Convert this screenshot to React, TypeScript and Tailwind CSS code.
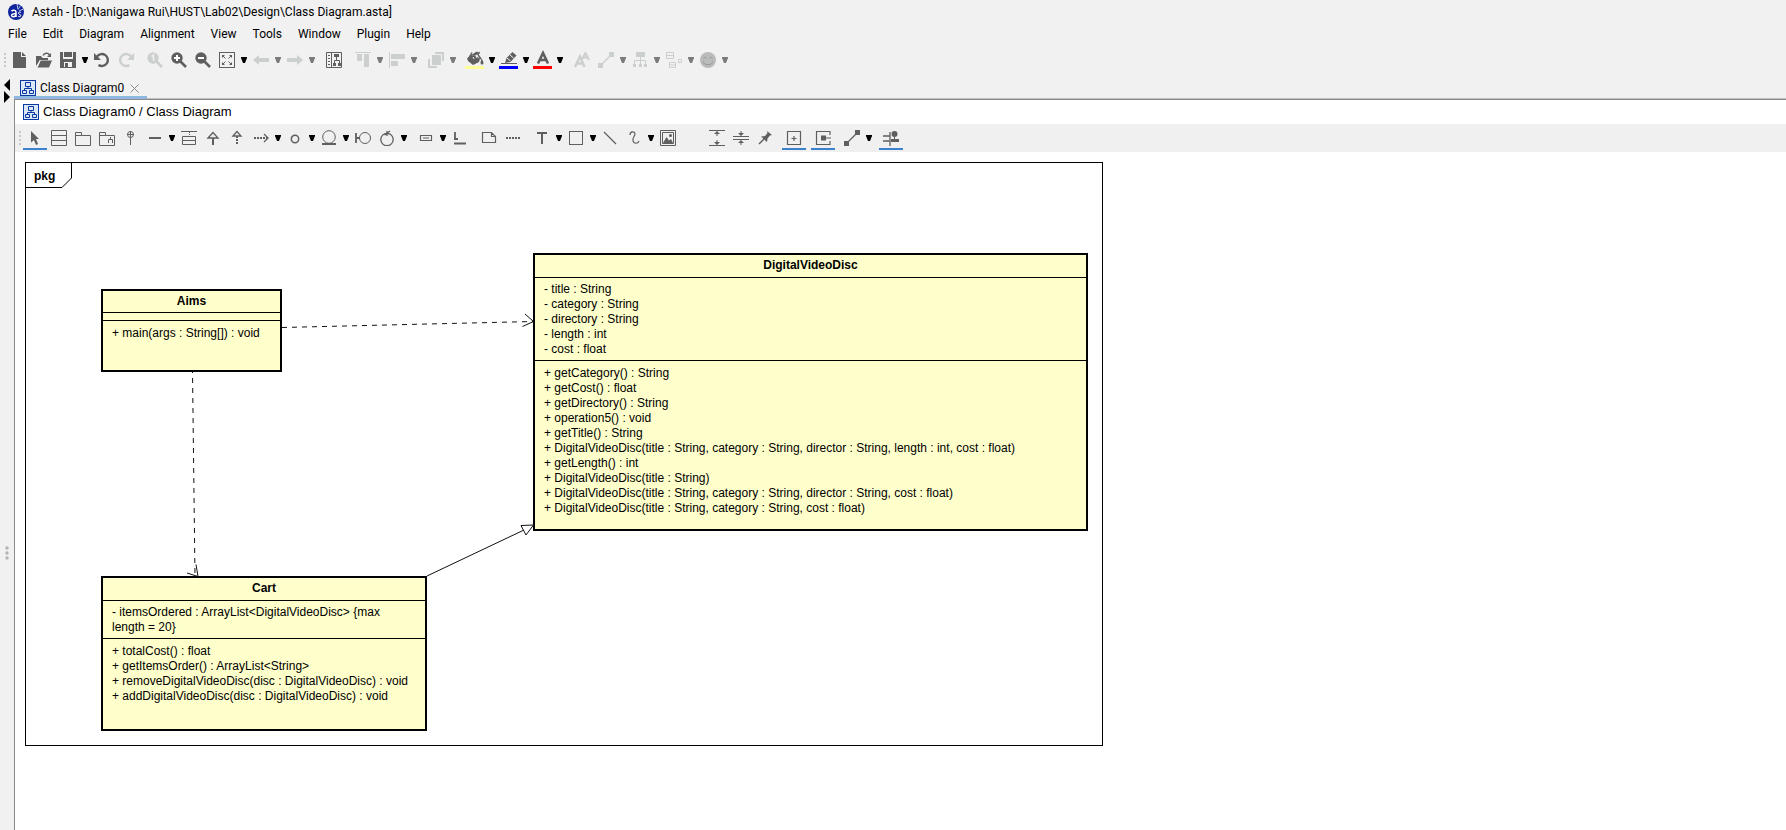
import type { ReactNode } from "react";

const DARK = "#5f5f5f";
const PALE = "#cbcfce";

function Icon({ children, size = 16 }: { children: ReactNode; size?: number }) {
  return (
    <svg
      width={size}
      height={size}
      viewBox={`0 0 ${size} ${size}`}
      fill="none"
      stroke={DARK}
      strokeWidth="1"
      className="block shrink-0"
      aria-hidden="true"
    >
      {children}
    </svg>
  );
}

function Tool({ label, active, children }: { label: string; active?: boolean; children: ReactNode }) {
  return (
    <button
      type="button"
      aria-label={label}
      className={
        active
          ? "flex h-6 w-6 shrink-0 items-center justify-center border-y-2 border-t-transparent border-b-[#3a82cb]"
          : "flex h-6 w-6 shrink-0 items-center justify-center"
      }
    >
      {children}
    </button>
  );
}

function Drop({ label, pale }: { label: string; pale?: boolean }) {
  return (
    <button
      type="button"
      aria-label={`${label} options`}
      className="flex h-6 w-[10px] shrink-0 items-center justify-center"
    >
      <svg width="6" height="6" viewBox="0 0 6 6" fill={pale ? "#7a7a7a" : "#000"} aria-hidden="true">
        <path d="M0 0h6v1L4 6H2L0 1z" />
      </svg>
    </button>
  );
}

function Gap() {
  return <span className="w-[5px] shrink-0" />;
}

function Grip() {
  return (
    <svg width="2" height="16" viewBox="0 0 2 16" fill="#c8c8c8" className="ml-1 mr-[2px] shrink-0" aria-hidden="true">
      <path d="M0 1h2v2H0zM0 5h2v2H0zM0 9h2v2H0zM0 13h2v2H0z" />
    </svg>
  );
}

function DiagramIcon() {
  return (
    <svg width="16" height="16" viewBox="0 0 16 16" fill="none" stroke="#0838a0" className="block shrink-0" aria-hidden="true">
      <rect x="0.5" y="0.5" width="15" height="15" fill="#dce8f8" />
      <path d="M5.5 2.5h5v4h-5zM2.5 10.5h4v3h-4zM9.5 10.5h4v3h-4zM8 6.5v2M4.5 10.5v-2h7v2" />
    </svg>
  );
}

function Magnifier({ color, children }: { color: string; children: ReactNode }) {
  return (
    <Icon>
      <circle cx="6" cy="6" r="5.7" fill={color} stroke="none" />
      <path d="M9.5 9.5l5.5 5.5" stroke={color} strokeWidth="2.6" />
      {children}
    </Icon>
  );
}

function MainToolbar() {
  return (
    <div role="toolbar" aria-label="Main" className="flex h-8 items-center">
      <Grip />
      <Tool label="New">
        <Icon>
          <path d="M1 0h8v5h5v11H1z" fill={DARK} stroke="none" />
          <path d="M10 0l4 4h-4z" fill={DARK} stroke="none" />
        </Icon>
      </Tool>
      <Tool label="Open">
        <Icon>
          <path d="M0 14V4h5l1.500 2H12v2H4z" fill={DARK} stroke="none" />
          <path d="M4.500 8.500H16l-3 7H1.500z" fill={DARK} stroke="none" />
          <path d="M4.300 8L1.300 15" stroke="#f1f1f1" />
          <path d="M7 3.500c1.500-3 5-3 6.500-.5" strokeWidth="1.500" />
          <path d="M15 1v4h-4z" fill={DARK} stroke="none" />
        </Icon>
      </Tool>
      <Tool label="Save">
        <Icon>
          <path d="M0 0h3v6h10V0h3v16H0z" fill={DARK} stroke="none" />
          <path d="M4 0h8v5H4z" fill={DARK} stroke="none" />
          <path d="M3.500 0v6M12.500 0v6M3 6.500h10" stroke="#f1f1f1" />
          <path d="M4 10h8v5H4z" fill="#f1f1f1" stroke="none" />
          <path d="M5 11h3v4H5z" fill={DARK} stroke="none" />
        </Icon>
      </Tool>
      <Drop label="Save" />
      <Tool label="Undo">
        <Icon>
          <path d="M3 4.500A6 6 0 1 1 4.500 13" strokeWidth="2.400" />
          <path d="M0 1v7h7z" fill={DARK} stroke="none" />
        </Icon>
      </Tool>
      <Tool label="Redo">
        <Icon>
          <path d="M13 4.500A6 6 0 1 0 11.500 13" stroke={PALE} strokeWidth="2.400" />
          <path d="M16 1v7H9z" fill={PALE} stroke="none" />
        </Icon>
      </Tool>
      <Gap />
      <Tool label="Actual size">
        <Magnifier color={PALE}>
          <path d="M4.500 4.500L6.500 3v6" stroke="#f1f1f1" strokeWidth="1.500" />
        </Magnifier>
      </Tool>
      <Tool label="Zoom in">
        <Magnifier color={DARK}>
          <path d="M3 6h6M6 3v6" stroke="#fff" strokeWidth="2" />
        </Magnifier>
      </Tool>
      <Tool label="Zoom out">
        <Magnifier color={DARK}>
          <path d="M3 6h6" stroke="#fff" strokeWidth="2" />
        </Magnifier>
      </Tool>
      <Tool label="Fit in window">
        <Icon>
          <rect x="0.500" y="0.500" width="15" height="15" />
          <path d="M3 6V3h3zM10 3h3v3zM13 10v3h-3zM6 13H3v-3z" fill={DARK} stroke="none" />
          <path d="M3 3l3.500 3.500M13 3L9.500 6.500M13 13L9.500 9.500M3 13l3.500-3.500" />
        </Icon>
      </Tool>
      <Drop label="Fit in window" />
      <Tool label="Back">
        <Icon>
          <path d="M0 8l6-5v3h10v4H6v3z" fill={PALE} stroke="none" />
        </Icon>
      </Tool>
      <Drop label="Back" pale />
      <Tool label="Forward">
        <Icon>
          <path d="M16 8l-6-5v3H0v4h10v3z" fill={PALE} stroke="none" />
        </Icon>
      </Tool>
      <Drop label="Forward" pale />
      <Gap />
      <Tool label="Structure map">
        <Icon>
          <path d="M0.500 0.500h15v15H0.500zM5.500 0v16M2 3.500h2M2 6.500h2M2 9.500h2M2 12.500h2" />
          <path d="M8 2h5v3H8zM7 11h3v3H7zM12 11h3v3h-3z" fill={DARK} stroke="none" />
          <path d="M10.500 5v3M8.500 11V8.500h5V11" />
        </Icon>
      </Tool>
      <Gap />
      <Tool label="Align top">
        <Icon>
          <path d="M0 0h16v1H0zM2 2h5v7H2zM9 2h5v13H9z" fill={PALE} stroke="none" />
        </Icon>
      </Tool>
      <Drop label="Align top" pale />
      <Tool label="Align left">
        <Icon>
          <path d="M0 0h1v16H0zM2 2h14v5H2zM2 9h7v5H2z" fill={PALE} stroke="none" />
        </Icon>
      </Tool>
      <Drop label="Align left" pale />
      <Gap />
      <Tool label="Order">
        <Icon>
          <path d="M7 0h9v9h-2V2H7zM0 7h2v7h7v2H0z" fill={PALE} stroke="none" />
          <path d="M4 3h9v10H4z" fill={PALE} stroke="none" />
        </Icon>
      </Tool>
      <Drop label="Order" pale />
      <Gap />
      <Tool label="Fill color">
        <Icon size={20}>
          <path d="M2 8.500L9 5l6 3.500-1 3.500-6 3-5-4z" fill={DARK} stroke="none" />
          <path d="M3 8l9-6M7 2.500L5 6l2 1M12 2l1.500 3.500L16 9M9 5l6-2.500" strokeWidth="1.400" />
          <path d="M8 7l1 2M11 6l1 2" stroke="#f1f1f1" />
          <path d="M16.500 8c1.500 3 2 4 2 5a1.500 1.500 0 0 1-3 0c0-1 .5-2 1-5z" fill={DARK} stroke="none" />
          <path d="M0 16h19v3H0z" fill="#ffff99" stroke="none" />
        </Icon>
      </Tool>
      <Drop label="Fill color" />
      <Tool label="Line color">
        <Icon size={20}>
          <path d="M6 13l1.500-5 6-6 4 3.500-6 6.500z" fill={DARK} stroke="none" />
          <path d="M2 13.500h16" />
          <path d="M8 8l3.500 3M11 5l3.500 3" stroke="#f1f1f1" />
          <path d="M0 16h19v3H0z" fill="#0000ff" stroke="none" />
        </Icon>
      </Tool>
      <Drop label="Line color" />
      <Tool label="Font color">
        <Icon size={20}>
          <path d="M5 13.500L10 3l5 10.500M6.500 10h7" strokeWidth="2.600" />
          <path d="M0 16h19v3H0z" fill="#ff0000" stroke="none" />
        </Icon>
      </Tool>
      <Drop label="Font color" />
      <Gap />
      <Tool label="Font">
        <Icon>
          <path d="M1 15L6 4.500 10.500 15M3 11.500h6" stroke={PALE} strokeWidth="2.400" />
          <path d="M8 7l3.500-6L15 8M9.500 5.500h4" stroke={PALE} strokeWidth="2" />
        </Icon>
      </Tool>
      <Tool label="Line style">
        <Icon>
          <path d="M0 11h5v5H0zM11 0h5v5h-5z" fill={PALE} stroke="none" />
          <path d="M3 13L13 3" stroke={PALE} strokeWidth="1.500" />
        </Icon>
      </Tool>
      <Drop label="Line style" pale />
      <Tool label="Tree layout">
        <Icon>
          <path d="M4 0h9v5H4zM1 12h3v3H1zM7 12h3v3H7zM12 12h3v3h-3z" fill={PALE} stroke="none" />
          <path d="M8.500 5v7M2.500 12V8.500h11V12" stroke={PALE} />
        </Icon>
      </Tool>
      <Drop label="Tree layout" pale />
      <Tool label="Presentation">
        <Icon>
          <path d="M0.500 0.500h7v6h-7zM0 3.500h8M3.500 10.500h6v5h-6zM3 13h7M12.500 7.500h3v3h-3z" stroke={PALE} />
        </Icon>
      </Tool>
      <Drop label="Presentation" pale />
      <Tool label="Icon">
        <Icon>
          <circle cx="8" cy="8" r="8" fill="#b9bcbb" stroke="none" />
          <path d="M3 9.500c1.500 4.500 8.500 4.500 10 0M3.500 6.500c.5-1.500 2.500-1.500 3 0M9.500 6.500c.5-1.500 2.500-1.500 3 0" stroke="#969998" />
        </Icon>
      </Tool>
      <Drop label="Icon" pale />
    </div>
  );
}

function DrawingToolbar() {
  return (
    <div role="toolbar" aria-label="Drawing" className="flex h-7 items-center bg-[#f0f0f0]">
      <Grip />
      <Tool label="Select" active>
        <Icon>
          <path d="M4 1l8 8H9l2 5-2 1-2-5-3 2.500z" fill={DARK} stroke="none" />
        </Icon>
      </Tool>
      <Tool label="Class">
        <Icon>
          <path d="M0.500 0.500h15v15H0.500zM0 5.500h16M0 10.500h16" />
        </Icon>
      </Tool>
      <Tool label="Package">
        <Icon>
          <path d="M0.500 15.500v-13h6v3h9v10zM0.500 5.500h6" />
        </Icon>
      </Tool>
      <Tool label="Subsystem">
        <Icon>
          <path d="M0.500 15.500v-13h6v3h9v10zM0.500 5.500h6M9.500 13v-3.500h4V13M11.500 9.500V7" />
        </Icon>
      </Tool>
      <Tool label="Nest">
        <Icon>
          <circle cx="7.500" cy="4.500" r="3" />
          <path d="M7.500 1v14M4 4.500h7" />
        </Icon>
      </Tool>
      <Tool label="Association">
        <Icon>
          <path d="M2 8h12" strokeWidth="2" />
        </Icon>
      </Tool>
      <Drop label="Association" />
      <Tool label="Association class">
        <Icon>
          <path d="M0 1.500h16M1.500 6.500h13v8h-13zM1 10.500h14" />
          <path d="M8.500 2v5" strokeDasharray="1 1" />
        </Icon>
      </Tool>
      <Tool label="Generalization">
        <Icon>
          <path d="M8 8v7" strokeWidth="2" />
          <path d="M3 8l5-5.500L13 8z" strokeWidth="1.300" />
        </Icon>
      </Tool>
      <Tool label="Realization">
        <Icon>
          <path d="M8 6v9" strokeWidth="2" strokeDasharray="2 1" />
          <path d="M4 6l4-4.500L12 6z" strokeWidth="1.300" />
        </Icon>
      </Tool>
      <Tool label="Dependency">
        <Icon>
          <path d="M1 8h13" strokeWidth="2" strokeDasharray="2 1" />
          <path d="M11 4l4 4-4 4" strokeWidth="1.300" />
        </Icon>
      </Tool>
      <Drop label="Dependency" />
      <Tool label="Interface">
        <Icon>
          <circle cx="8" cy="9" r="3.700" strokeWidth="1.500" />
        </Icon>
      </Tool>
      <Drop label="Interface" />
      <Tool label="Entity">
        <Icon>
          <circle cx="8" cy="7" r="6.300" />
          <path d="M1 14h14" strokeWidth="2" />
        </Icon>
      </Tool>
      <Drop label="Entity" />
      <Tool label="Boundary">
        <Icon>
          <circle cx="10" cy="8" r="5.500" />
          <path d="M1 3v10M1 8h4" strokeWidth="1.800" />
        </Icon>
      </Tool>
      <Tool label="Control">
        <Icon>
          <circle cx="8" cy="9.500" r="6.200" strokeWidth="1.300" />
          <path d="M8 1v5M8 3l3-2M8 3.500L5.500 5" strokeWidth="1.300" />
        </Icon>
      </Tool>
      <Drop label="Control" />
      <Gap />
      <Tool label="Instance specification">
        <Icon>
          <path d="M2.500 5.500h11v5h-11zM5 8h6" strokeWidth="1.200" />
        </Icon>
      </Tool>
      <Drop label="Instance specification" />
      <Tool label="Link">
        <Icon>
          <path d="M3 2v7M2 9h4M2 13.500h12" strokeWidth="1.800" />
        </Icon>
      </Tool>
      <Gap />
      <Tool label="Note">
        <Icon>
          <path d="M1.500 2.500h9l4 4v6h-13zM10.500 2.500v4h4" strokeWidth="1.200" />
        </Icon>
      </Tool>
      <Tool label="Note anchor">
        <Icon>
          <path d="M1 8h14" strokeWidth="2" strokeDasharray="2 1" />
        </Icon>
      </Tool>
      <Gap />
      <Tool label="Text">
        <Icon>
          <path d="M3 3h10M8 3v11" strokeWidth="2" />
        </Icon>
      </Tool>
      <Drop label="Text" />
      <Tool label="Rectangle">
        <Icon>
          <rect x="1.500" y="1.500" width="13" height="13" />
        </Icon>
      </Tool>
      <Drop label="Rectangle" />
      <Tool label="Line">
        <Icon>
          <path d="M2 2l12 12" strokeWidth="1.300" />
        </Icon>
      </Tool>
      <Tool label="Freehand">
        <Icon>
          <path d="M4 5c0-4 5-4 5-1 0 2-3 4-2 7s5 3 6 0" strokeWidth="1.200" />
        </Icon>
      </Tool>
      <Drop label="Freehand" />
      <Tool label="Image">
        <Icon>
          <path d="M0.500 0.500h15v15H0.500zM2.500 2.500h11v11h-11z" />
          <path d="M3 13l3.500-6L9 10.500 11 9l2 4z" fill={DARK} stroke="none" />
          <circle cx="10.500" cy="5.500" r="1.500" fill={DARK} stroke="none" />
        </Icon>
      </Tool>
      <span className="w-[25px] shrink-0" />
      <Tool label="Expand vertically">
        <Icon>
          <path d="M0 0.500h16M0 15.500h16M8 2v4M8 10v4" />
          <path d="M5 4l3-3 3 3zM5 12l3 3 3-3z" fill={DARK} stroke="none" />
        </Icon>
      </Tool>
      <Tool label="Shrink vertically">
        <Icon>
          <path d="M0 6.500h16M0 9.500h16M8 1v4M8 11v4" />
          <path d="M5 3l3 3 3-3zM5 13l3-3 3 3z" fill={DARK} stroke="none" />
        </Icon>
      </Tool>
      <Tool label="Pin">
        <Icon>
          <path d="M2 14l5-5" strokeWidth="1.400" />
          <path d="M10 1l5 4-2 .5-2.500 3L10 12 4 6.500l4-.5 2.500-3z" fill={DARK} stroke="none" />
        </Icon>
      </Tool>
      <Gap />
      <Tool label="Auto expand" active>
        <Icon>
          <path d="M1.500 1.500h13v13h-13zM5.500 8.500h5M8 6v5" strokeWidth="1.200" />
        </Icon>
      </Tool>
      <Gap />
      <Tool label="Snap to shape" active>
        <Icon>
          <path d="M15 5V1.500H1.500v13H15V11M8 8h8" strokeWidth="1.200" />
          <path d="M6 5.500h5v5H6z" fill={DARK} stroke="none" />
        </Icon>
      </Tool>
      <Gap />
      <Tool label="Line shape">
        <Icon>
          <path d="M0 11h5v5H0zM11 0h5v5h-5z" fill={DARK} stroke="none" />
          <path d="M3 13L13 3" strokeWidth="1.300" />
        </Icon>
      </Tool>
      <Drop label="Line shape" />
      <Gap />
      <Tool label="Auto alignment" active>
        <Icon>
          <path d="M0 6h7M0 11h7M7 2v14" strokeWidth="1.300" />
          <circle cx="11.500" cy="4" r="3" fill={DARK} stroke="none" />
          <path d="M8 9h8v3H8zM11 6h1v4h-1z" fill={DARK} stroke="none" />
        </Icon>
      </Tool>
    </div>
  );
}

function ClassNode({
  name,
  place,
  attributes,
  operations,
}: {
  name: string;
  place: string;
  attributes: string[];
  operations: string[];
}) {
  return (
    <section
      className={`absolute flex flex-col border-2 border-black bg-[#ffffcc] text-[12px] leading-[15px] ${place}`}
    >
      <h2
        className={
          attributes.length
            ? "border-b border-black pt-[3px] pb-1 text-center font-bold"
            : "border-b border-black py-[3px] text-center font-bold"
        }
      >
        {name}
      </h2>
      <ul className={attributes.length ? "border-b border-black pt-1 pr-4 pb-[3px] pl-[9px]" : "h-2 border-b border-black"}>
        {attributes.map((a) => (
          <li key={a}>{a}</li>
        ))}
      </ul>
      <ul className="pt-[5px] pl-[9px]">
        {operations.map((o) => (
          <li key={o}>{o}</li>
        ))}
      </ul>
    </section>
  );
}

function Canvas() {
  return (
    <div className="relative min-h-[620px] flex-1 overflow-hidden bg-white font-['Liberation_Sans',Arial,sans-serif] text-black">
      <div className="absolute top-[10px] left-[10px] h-[584px] w-[1078px] border border-black" />
      <svg className="absolute top-[10px] left-[10px]" width="47" height="26" fill="none" stroke="#000" aria-hidden="true">
        <path d="M0 25.500h37l9.500-9.500V0" />
      </svg>
      <h1 className="absolute top-[17px] left-[19px] text-[12px] leading-[15px] font-bold">pkg</h1>

      <ClassNode
        name="Aims"
        place="top-[137px] left-[86px] h-[83px] w-[181px]"
        attributes={[]}
        operations={["+ main(args : String[]) : void"]}
      />
      <ClassNode
        name="DigitalVideoDisc"
        place="top-[101px] left-[518px] h-[278px] w-[555px]"
        attributes={["- title : String", "- category : String", "- directory : String", "- length : int", "- cost : float"]}
        operations={[
          "+ getCategory() : String",
          "+ getCost() : float",
          "+ getDirectory() : String",
          "+ operation5() : void",
          "+ getTitle() : String",
          "+ DigitalVideoDisc(title : String, category : String, director : String, length : int, cost : float)",
          "+ getLength() : int",
          "+ DigitalVideoDisc(title : String)",
          "+ DigitalVideoDisc(title : String, category : String, director : String, cost : float)",
          "+ DigitalVideoDisc(title : String, category : String, cost : float)",
        ]}
      />
      <ClassNode
        name="Cart"
        place="top-[424px] left-[86px] h-[155px] w-[326px]"
        attributes={["- itemsOrdered : ArrayList<DigitalVideoDisc> {max length = 20}"]}
        operations={[
          "+ totalCost() : float",
          "+ getItemsOrder() : ArrayList<String>",
          "+ removeDigitalVideoDisc(disc : DigitalVideoDisc) : void",
          "+ addDigitalVideoDisc(disc : DigitalVideoDisc) : void",
        ]}
      />

      <svg
        className="pointer-events-none absolute top-0 left-0"
        width="1080"
        height="600"
        fill="none"
        stroke="#111"
        aria-hidden="true"
      >
        <path d="M267 175.500L518 169.500" strokeDasharray="5 5" />
        <path d="M177.500 220L180 424" strokeDasharray="5 5" strokeDashoffset="4" />
        <path d="M510 162l8.500 7.500-11 5M172 421l11 3.500-2-12" />
        <path d="M412 424l97-46" />
        <path d="M506 373.500l12.500-.5-7.500 10z" fill="#fff" />
      </svg>
    </div>
  );
}

const MENUS = ["File", "Edit", "Diagram", "Alignment", "View", "Tools", "Window", "Plugin", "Help"];

export default function App() {
  return (
    <div className="flex min-h-screen flex-col bg-[#f1f1f1] font-[Roboto,'Noto_Sans',sans-serif] text-[12px] text-black">
      <header className="flex flex-col">
        <div className="flex h-6 items-center gap-2 pl-2">
          <svg width="16" height="16" viewBox="0 0 16 16" className="shrink-0" aria-hidden="true">
            <circle cx="8" cy="8" r="8" fill="#10249b" />
            <path d="M9 0l1 5M12.500 1.500L10 5.500M15.500 5L11 7" stroke="#c9d4f2" strokeWidth="0.900" />
            <path d="M3.500 7.200c1-1.200 4.500-1.500 4.500 1V13M8 9.800c-5-.8-5.500 2.900-2.700 2.900C7 12.700 8 11.500 8 10.500" fill="none" stroke="#fff" strokeWidth="1.500" />
            <path d="M13 8.500c-1.500-.8-3-.2-2.500 1s2.500.8 2.300 2.200-2 1-2.800.4" fill="none" stroke="#fff" />
          </svg>
          <span>Astah - [D:\Nanigawa Rui\HUST\Lab02\Design\Class Diagram.asta]</span>
        </div>
        <nav aria-label="Menu bar" className="flex h-5 items-center gap-4 pl-2">
          {MENUS.map((m) => (
            <button key={m} type="button">
              {m}
            </button>
          ))}
        </nav>
        <MainToolbar />
      </header>

      <div className="flex flex-1">
        <aside className="flex w-[14px] shrink-0 flex-col items-center pt-[3px]">
          <button type="button" aria-label="Collapse panel">
            <svg width="6" height="12" viewBox="0 0 6 12" className="block">
              <path d="M6 0v12L0 6z" />
            </svg>
          </button>
          <button type="button" aria-label="Expand panel">
            <svg width="6" height="12" viewBox="0 0 6 12" className="block">
              <path d="M0 0v12l6-6z" />
            </svg>
          </button>
          <svg width="4" height="14" viewBox="0 0 4 14" fill="#b4b4b4" className="mt-[443px]" aria-hidden="true">
            <circle cx="2" cy="2" r="1.700" />
            <circle cx="2" cy="7" r="1.700" />
            <circle cx="2" cy="12" r="1.700" />
          </svg>
        </aside>

        <main className="flex min-w-0 flex-1 flex-col">
          <div role="tablist" className="flex h-[23px] items-start border-b border-[#c0c0c0]">
            <div className="flex h-[23px] items-center border-b-[3px] border-[#8fb8e0] pt-1 pr-2 pl-[6px]">
              <button type="button" role="tab" aria-selected="true" className="flex items-center gap-1">
                <DiagramIcon />
                <span>Class Diagram0</span>
              </button>
              <button type="button" aria-label="Close tab" className="ml-[6px]">
                <svg width="9" height="9" viewBox="0 0 9 9" stroke="#8a8a8a" className="block">
                  <path d="M0.500 0.500l8 8M8.500 0.500l-8 8" />
                </svg>
              </button>
            </div>
          </div>
          <div className="flex flex-1 flex-col border-l border-t border-[#8c8c8c] bg-white">
            <div className="flex h-6 items-center gap-1 pl-2 font-['Liberation_Sans',Arial,sans-serif] text-[13px]">
              <DiagramIcon />
              <span>Class Diagram0 / Class Diagram</span>
            </div>
            <DrawingToolbar />
            <Canvas />
          </div>
        </main>
      </div>
    </div>
  );
}
